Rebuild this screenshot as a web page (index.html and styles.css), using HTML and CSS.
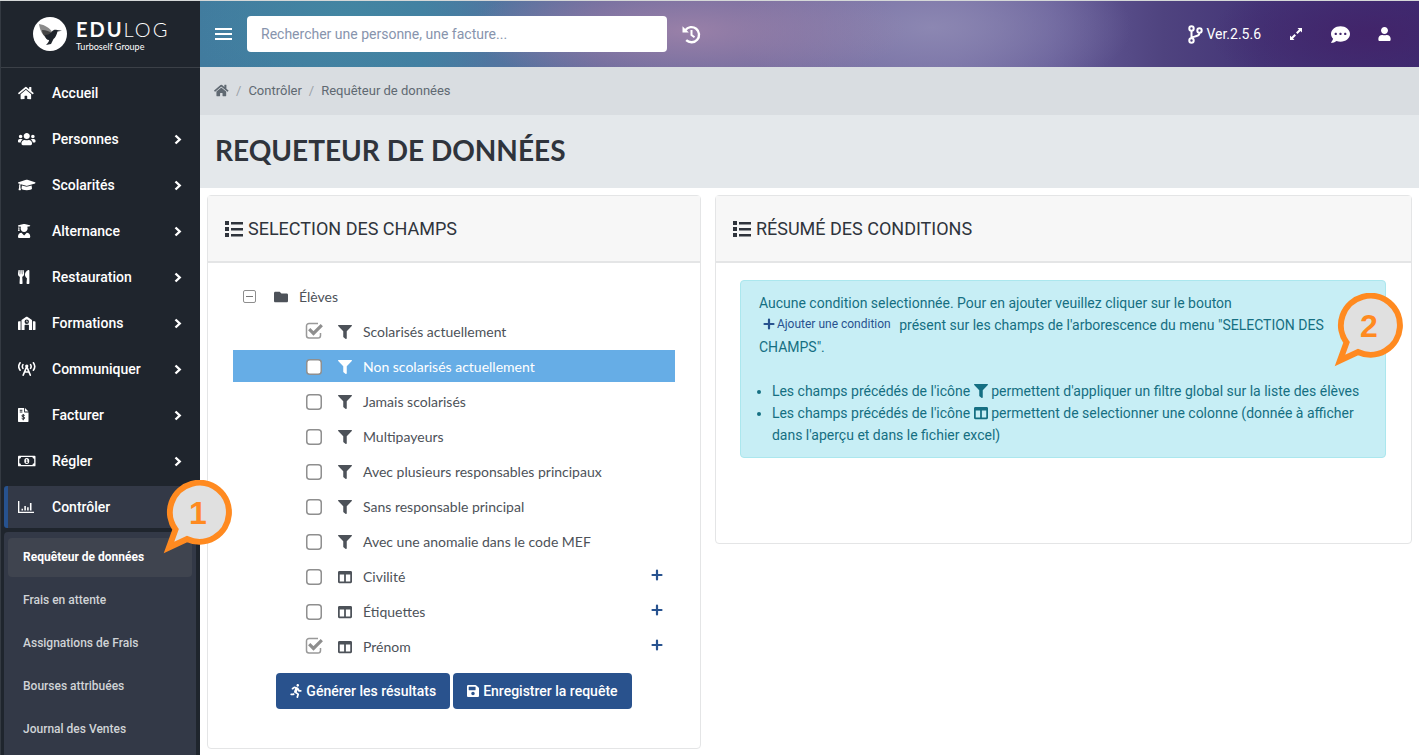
FILE: index.html
```html
<!DOCTYPE html>
<html lang="fr">
<head>
<meta charset="utf-8">
<meta name="viewport" content="width=device-width, initial-scale=1">
<title>Edulog - Requêteur de données</title>
<link rel="stylesheet" href="styles.css">
</head>
<body>
<svg class="sprite" aria-hidden="true">
  <symbol id="home" viewBox="0 0 576 512" preserveAspectRatio="xMinYMid"><path d="M280.37 148.26L96 300.11V464a16 16 0 0 0 16 16l112.06-.29a16 16 0 0 0 15.92-16V368a16 16 0 0 1 16-16h64a16 16 0 0 1 16 16v95.64a16 16 0 0 0 16 16.05L464 480a16 16 0 0 0 16-16V300L295.67 148.26a12.19 12.19 0 0 0-15.3 0zM571.6 251.47L488 182.56V44.05a12 12 0 0 0-12-12h-56a12 12 0 0 0-12 12v72.61L318.47 43a48 48 0 0 0-61 0L4.34 251.47a12 12 0 0 0-1.6 16.9l25.5 31A12 12 0 0 0 45.15 301l235.22-193.74a12.19 12.19 0 0 1 15.3 0L530.9 301a12 12 0 0 0 16.9-1.6l25.5-31a12 12 0 0 0-1.7-16.93z"/></symbol>
  <symbol id="users" viewBox="0 0 640 512" preserveAspectRatio="xMinYMid"><path d="M96 224c35.3 0 64-28.7 64-64s-28.7-64-64-64-64 28.7-64 64 28.7 64 64 64zm448 0c35.3 0 64-28.7 64-64s-28.7-64-64-64-64 28.7-64 64 28.7 64 64 64zm32 32h-64c-17.6 0-33.5 7.1-45.1 18.6 40.3 22.1 68.9 62 75.1 109.4h66c17.7 0 32-14.3 32-32v-32c0-35.3-28.7-64-64-64zm-256 0c61.9 0 112-50.1 112-112S381.9 32 320 32 208 82.1 208 144s50.1 112 112 112zm76.8 32h-8.3c-20.8 10-43.9 16-68.5 16s-47.6-6-68.5-16h-8.3C179.6 288 128 339.6 128 403.2V432c0 26.5 21.5 48 48 48h288c26.5 0 48-21.5 48-48v-28.8c0-63.6-51.6-115.2-115.2-115.2zm-223.7-13.4C161.5 263.1 145.6 256 128 256H64c-35.3 0-64 28.7-64 64v32c0 17.7 14.3 32 32 32h65.9c6.3-47.4 34.9-87.3 75.2-109.4z"/></symbol>
  <symbol id="cap" viewBox="0 0 640 512" preserveAspectRatio="xMinYMid"><path d="M622.34 153.2L343.4 67.5c-15.2-4.67-31.6-4.67-46.79 0L17.66 153.2c-23.54 7.23-23.54 38.36 0 45.59l48.63 14.94c-10.67 13.19-17.23 29.28-17.88 46.9C38.78 266.15 32 276.11 32 288c0 10.78 5.68 19.85 13.86 25.65L20.33 428.53C18.11 438.52 25.71 448 35.94 448h56.11c10.24 0 17.84-9.48 15.62-19.47L82.14 313.65C90.32 307.85 96 298.78 96 288c0-11.57-6.47-21.25-15.66-26.87.76-15.02 8.44-28.3 20.69-36.72L296.6 284.5c9.06 2.78 26.44 6.25 46.79 0l278.95-85.7c23.55-7.24 23.55-38.36 0-45.6zM352.79 315.09c-28.53 8.76-52.84 3.92-65.59 0l-145.02-44.55L128 384c0 35.35 85.96 64 192 64s192-28.65 192-64l-14.18-113.47-145.03 44.56z"/></symbol>
  <symbol id="graduate" viewBox="0 0 448 512" preserveAspectRatio="xMinYMid"><path d="M319.4 320.6L224 416l-95.4-95.4C57.1 323.7 0 382.2 0 454.4v9.6c0 26.5 21.5 48 48 48h352c26.5 0 48-21.5 48-48v-9.6c0-72.2-57.1-130.7-128.6-133.8zM13.6 79.8l6.4 1.5v58.4c-7 4.2-12 11.5-12 20.3 0 8.4 4.6 15.4 11.1 19.7L3.5 242c-1.7 6.9 2.1 14 7.6 14h41.8c5.5 0 9.3-7.1 7.6-14l-15.6-62.3C51.4 175.4 56 168.4 56 160c0-8.8-5-16.1-12-20.3V87.1l66 15.9c-8.6 17.2-14 36.4-14 57 0 70.7 57.3 128 128 128s128-57.3 128-128c0-20.6-5.3-39.8-14-57l96.3-23.2c18.2-4.4 18.2-27.1 0-31.5l-190.4-46c-13-3.1-26.7-3.1-39.7 0L13.6 48.2c-18.1 4.4-18.1 27.2 0 31.6z"/></symbol>
  <symbol id="utensils" viewBox="0 0 416 512" preserveAspectRatio="xMinYMid"><path d="M207.9 15.2c.8 4.7 16.1 94.5 16.1 128.8 0 52.3-27.8 89.6-68.9 104.6L168 486.7c.7 13.7-10.2 25.3-24 25.3H80c-13.7 0-24.7-11.5-24-25.3l12.9-238.1C27.7 233.6 0 196.2 0 144 0 109.6 15.3 19.9 16.1 15.2 19.3-5.1 61.4-5.4 64 16.3v141.2c1.3 3.4 15.1 3.2 16 0 1.4-25.3 7.9-139.2 8-141.8 3.3-20.8 44.7-20.8 47.9 0 .2 2.7 6.6 116.5 8 141.8.9 3.2 14.8 3.4 16 0V16.3c2.6-21.6 44.8-21.4 48-1.1zm119.2 285.7l-15 185.1c-1.2 14 9.9 26 23.9 26h56c13.3 0 24-10.7 24-24V24c0-13.2-10.7-24-24-24-82.5 0-221.4 178.5-64.9 300.9z"/></symbol>
  <symbol id="school" viewBox="0 0 640 512" preserveAspectRatio="xMinYMid"><path fill-rule="evenodd" d="M0 224a32 32 0 0 1 32-32h64v320H16a16 16 0 0 1-16-16zM544 192h64a32 32 0 0 1 32 32v272a16 16 0 0 1-16 16h-80zM128 164a32 32 0 0 1 14-26L302 31a32 32 0 0 1 36 0l160 107a32 32 0 0 1 14 26v348H400V336a16 16 0 0 0-16-16H256a16 16 0 0 0-16 16v176H128zM320 128a80 80 0 1 0 0 160 80 80 0 0 0 0-160zm-12 36h24v36h32v24h-56z"/></symbol>
  <symbol id="tower" viewBox="0 0 640 512" preserveAspectRatio="xMinYMid"><g fill="none" stroke="currentColor" stroke-width="58" stroke-linecap="round"><path d="M78 28C18 110 18 222 78 298M562 28c60 82 60 194 0 270M180 96c-28 45-28 94 0 138M460 96c28 45 28 94 0 138"/><path d="M320 170L190 482M320 170l130 312M240 364h160"/></g><circle cx="320" cy="150" r="60"/></symbol>
  <symbol id="invoice" viewBox="0 0 384 512" preserveAspectRatio="xMinYMid"><path fill-rule="evenodd" d="M24 0h200v136a24 24 0 0 0 24 24h136v328a24 24 0 0 1-24 24H24a24 24 0 0 1-24-24V24A24 24 0 0 1 24 0zM64 64v32h96V64zm0 64v32h96v-32zM256 0l128 128H256z"/><path fill="none" stroke="#1f242b" stroke-width="36" d="M245 274c-20-25-102-28-106 14-3 44 109 28 108 77-1 43-85 48-113 12M192 224v224"/></symbol>
  <symbol id="money" viewBox="0 0 640 512" preserveAspectRatio="xMinYMid"><path fill-rule="evenodd" d="M32 64h576a32 32 0 0 1 32 32v320a32 32 0 0 1-32 32H32a32 32 0 0 1-32-32V96a32 32 0 0 1 32-32zm80 48a64 64 0 0 1-64 64v160a64 64 0 0 1 64 64h416a64 64 0 0 1 64-64V176a64 64 0 0 1-64-64z"/><ellipse cx="320" cy="256" rx="92" ry="112"/><path fill="none" stroke="#1f242b" stroke-width="34" d="M290 220l32-18v96m-34 14h68"/></symbol>
  <symbol id="chart" viewBox="0 0 512 448" preserveAspectRatio="xMinYMid"><path d="M0 32h44v340h468v44H0zM112 276h50v60h-50zm90-84h50v144h-50zm90 40h50v104h-50zm90-136h50v240h-50z"/></symbol>
  <symbol id="chevron" viewBox="0 0 8 12"><path fill="none" stroke="currentColor" stroke-width="2.4" d="M1.5 2.500L5.700 6.500l-4.200 4"/></symbol>
  <symbol id="filter" viewBox="0 0 512 512"><path d="M487.976 0H24.028C2.71 0-8.047 25.866 7.058 40.971L192 225.941V432c0 7.831 3.821 15.17 10.237 19.662l80 55.98C298.02 518.69 320 507.493 320 487.98V225.941l184.947-184.97C520.021 25.896 509.338 0 487.976 0z"/></symbol>
  <symbol id="columns" viewBox="0 0 512 512"><path d="M464 32H48C21.49 32 0 53.49 0 80v352c0 26.51 21.49 48 48 48h416c26.51 0 48-21.49 48-48V80c0-26.51-21.49-48-48-48zM224 416H64V160h160v256zm224 0H288V160h160v256z"/></symbol>
  <symbol id="folder" viewBox="0 0 512 512"><path d="M464 128H272l-64-64H48C21.49 64 0 85.49 0 112v288c0 26.51 21.49 48 48 48h416c26.51 0 48-21.49 48-48V176c0-26.51-21.49-48-48-48z"/></symbol>
  <symbol id="plus" viewBox="0 0 12 12"><path fill="none" stroke="currentColor" stroke-width="2.2" stroke-linecap="round" d="M6 1.5v9M1.5 6h9"/></symbol>
  <symbol id="list" viewBox="0 0 18 16"><path d="M0 0h4v4H0zM0 6h4v4H0zM0 12h4v4H0zM6 1h12v2.500H6zM6 7h12v2.500H6zM6 13h12v2.500H6z"/></symbol>
  <symbol id="save" viewBox="0 0 448 512"><path d="M433.941 129.941l-83.882-83.882A48 48 0 0 0 316.118 32H48C21.49 32 0 53.49 0 80v352c0 26.51 21.49 48 48 48h352c26.51 0 48-21.49 48-48V163.882a48 48 0 0 0-14.059-33.941zM224 416c-35.346 0-64-28.654-64-64 0-35.346 28.654-64 64-64s64 28.654 64 64c0 35.346-28.654 64-64 64zm96-304.52V212c0 6.627-5.373 12-12 12H76c-6.627 0-12-5.373-12-12V108c0-6.627 5.373-12 12-12h228.52c3.183 0 6.235 1.264 8.485 3.515l3.48 3.48A11.996 11.996 0 0 1 320 111.48z"/></symbol>
  <symbol id="running" viewBox="0 0 416 512"><path d="M272 96c26.51 0 48-21.49 48-48S298.51 0 272 0s-48 21.49-48 48 21.49 48 48 48zM113.69 317.47l-14.8 34.52H32c-17.67 0-32 14.33-32 32s14.33 32 32 32h77.45c19.25 0 36.58-11.44 44.11-29.09l8.79-20.52-10.67-6.3c-17.32-10.23-30.06-25.37-37.99-42.61zM384 223.99h-44.03l-26.06-53.25c-12.5-25.55-35.45-44.23-61.78-50.94l-71.08-21.14c-28.3-6.8-57.77-.55-80.84 17.14l-39.67 30.41c-14.03 10.75-16.69 30.83-5.92 44.86s30.84 16.66 44.86 5.92l39.69-30.41c7.67-5.89 17.44-8 25.27-6.14l14.7 4.37-37.46 87.39c-12.62 29.48-1.31 64.01 26.3 80.31l84.98 50.17-27.47 87.73c-5.28 16.86 4.11 34.82 20.97 40.09 3.19 1 6.41 1.48 9.58 1.48 13.61 0 26.23-8.77 30.52-22.45l31.64-101.06c5.91-20.77-2.89-43.08-21.64-54.39l-61.24-36.14 31.31-78.28 20.27 41.43c8 16.34 24.92 26.89 43.11 26.89H384c17.67 0 32-14.33 32-32s-14.33-31.99-32-31.99z"/></symbol>
  <symbol id="user" viewBox="0 0 448 512"><path d="M224 256c70.7 0 128-57.3 128-128S294.7 0 224 0 96 57.3 96 128s57.3 128 128 128zm89.6 32h-16.7c-22.2 10.2-46.9 16-72.9 16s-50.6-5.8-72.9-16h-16.7C60.2 288 0 348.2 0 422.4V464c0 26.5 21.5 48 48 48h352c26.5 0 48-21.5 48-48v-41.6c0-74.2-60.2-134.4-134.4-134.4z"/></symbol>
  <symbol id="comment" viewBox="0 0 512 512"><path d="M256 32C114.6 32 0 125.1 0 240c0 49.6 21.4 95 57 130.7C44.5 421.1 2.7 466 2.2 466.5c-2.2 2.3-2.8 5.7-1.5 8.7S4.8 480 8 480c66.3 0 116-31.8 140.6-51.4 32.7 12.3 69 19.4 107.4 19.4 141.4 0 256-93.1 256-208S397.4 32 256 32zM128 272c-17.7 0-32-14.3-32-32s14.3-32 32-32 32 14.3 32 32-14.3 32-32 32zm128 0c-17.7 0-32-14.3-32-32s14.3-32 32-32 32 14.3 32 32-14.3 32-32 32zm128 0c-17.7 0-32-14.3-32-32s14.3-32 32-32 32 14.3 32 32-14.3 32-32 32z"/></symbol>
  <symbol id="check" viewBox="0 0 18 18"><path fill="none" stroke="#999" stroke-width="1.5" d="M13 1.5H4A2.5 2.5 0 0 0 1.500 4v9.500a2.500 2.500 0 0 0 2.500 2.500h9a2.500 2.500 0 0 0 2.500-2.500V11"/><path fill="none" stroke="#8e8e8e" stroke-width="3.200" d="M4.200 7.200l4.300 4.300 8.300-8.300"/></symbol>
  <symbol id="box" viewBox="0 0 16 16"><rect x=".75" y=".75" width="14.500" height="14.500" rx="3" fill="#fff" stroke="#8f8f8f" stroke-width="1.500"/></symbol>
  <symbol id="bubble" viewBox="0 0 80 78"><path fill="#e0e0e0" stroke="#ff8a20" stroke-width="6" stroke-linejoin="miter" stroke-miterlimit="8" d="M19.500 49.500A29.500 29.500 0 1 1 31 59L13 67.500z"/></symbol>
</svg>

<div class="app">
  <aside class="sidebar">
    <a class="brand" href="#">
      <svg class="brand-mark" viewBox="0 0 34 34" aria-hidden="true"><circle cx="17" cy="17" r="17" fill="#fff"/><path fill="#8a8a8a" d="M6 7c6 1 11 4 13 8l-6 5C9 18 7 13 6 7z"/><path fill="#444" d="M9 13c4 0 8 1 10 4l-6 4c-2-2-4-5-4-8z"/><path fill="#1f242b" d="M12 18c3 0 5-1 7-3.500C20 13 22 12.500 24 13l5 .8-4.500.7c-1 3.500-2 6-4 7.500L18 27l-5 1c2-2 3-3.500 3-5-2 0-4-2-4-5z"/></svg>
      <span class="brand-text"><span class="brand-name"><b>EDU</b>LOG</span><span class="brand-sub">Turboself Groupe</span></span>
    </a>
    <nav class="nav" aria-label="Menu principal">
      <a class="nav-item" href="#"><svg class="nav-icon"><use href="#home"/></svg><span>Accueil</span></a>
      <a class="nav-item" href="#"><svg class="nav-icon"><use href="#users"/></svg><span>Personnes</span><svg class="chevron"><use href="#chevron"/></svg></a>
      <a class="nav-item" href="#"><svg class="nav-icon"><use href="#cap"/></svg><span>Scolarités</span><svg class="chevron"><use href="#chevron"/></svg></a>
      <a class="nav-item" href="#"><svg class="nav-icon"><use href="#graduate"/></svg><span>Alternance</span><svg class="chevron"><use href="#chevron"/></svg></a>
      <a class="nav-item" href="#"><svg class="nav-icon"><use href="#utensils"/></svg><span>Restauration</span><svg class="chevron"><use href="#chevron"/></svg></a>
      <a class="nav-item" href="#"><svg class="nav-icon"><use href="#school"/></svg><span>Formations</span><svg class="chevron"><use href="#chevron"/></svg></a>
      <a class="nav-item" href="#"><svg class="nav-icon"><use href="#tower"/></svg><span>Communiquer</span><svg class="chevron"><use href="#chevron"/></svg></a>
      <a class="nav-item" href="#"><svg class="nav-icon"><use href="#invoice"/></svg><span>Facturer</span><svg class="chevron"><use href="#chevron"/></svg></a>
      <a class="nav-item" href="#"><svg class="nav-icon"><use href="#money"/></svg><span>Régler</span><svg class="chevron"><use href="#chevron"/></svg></a>
      <a class="nav-item active" href="#"><svg class="nav-icon"><use href="#chart"/></svg><span>Contrôler</span></a>
      <div class="subnav">
        <a class="sub-item active" href="#">Requêteur de données</a>
        <a class="sub-item" href="#">Frais en attente</a>
        <a class="sub-item" href="#">Assignations de Frais</a>
        <a class="sub-item" href="#">Bourses attribuées</a>
        <a class="sub-item" href="#">Journal des Ventes</a>
        <div class="callout callout-menu"><svg><use href="#bubble"/></svg><span>1</span></div>
      </div>
    </nav>
  </aside>

  <div class="main">
    <header class="topbar">
      <button class="icon-btn" type="button" aria-label="Menu"><svg width="17" height="12" viewBox="0 0 17 12"><path d="M0 0h17v2H0zM0 5h17v2H0zM0 10h17v2H0z"/></svg></button>
      <input class="search" type="search" aria-label="Rechercher" placeholder="Rechercher une personne, une facture...">
      <button class="icon-btn" type="button" aria-label="Historique"><svg width="19" height="19" viewBox="0 0 19 19"><g fill="none" stroke="currentColor"><path stroke-width="2.400" d="M3.300 5.200A7.600 7.600 0 1 1 4.200 15.200"/><path stroke-width="2" d="M9.500 5v5l3 2.300"/></g><path d="M.5 1.200v6.300h6.300z"/></svg></button>
      <div class="tools">
        <a class="version" href="#"><svg width="15" height="19" viewBox="0 0 15 19"><g fill="none" stroke="currentColor" stroke-width="2"><circle cx="3.500" cy="3.500" r="2.200"/><circle cx="3.500" cy="15.500" r="2.200"/><circle cx="11.500" cy="5.500" r="2.200"/><path d="M3.500 5.500v8M11.500 7.500c0 3.500-2.500 3.500-8 5"/></g></svg>Ver.2.5.6</a>
        <button class="icon-btn" type="button" aria-label="Plein écran"><svg width="14" height="14" viewBox="0 0 14 14"><path d="M8.500 1H13v4.500l-1.500-1.500-3 3L7 5.500l3-3zM5.500 13H1V8.500L2.500 10l3-3L7 8.500l-3 3z"/></svg></button>
        <button class="icon-btn" type="button" aria-label="Messages"><svg width="19" height="19"><use href="#comment"/></svg></button>
        <button class="icon-btn" type="button" aria-label="Profil"><svg width="13" height="14"><use href="#user"/></svg></button>
      </div>
    </header>

    <nav class="breadcrumb" aria-label="Fil d'Ariane">
      <a href="#" aria-label="Accueil"><svg width="15" height="13"><use href="#home"/></svg></a>
      <span class="sep">/</span><a href="#">Contrôler</a>
      <span class="sep">/</span><a href="#">Requêteur de données</a>
    </nav>
    <div class="page-head"><h1>REQUETEUR DE DONNÉES</h1></div>

    <main class="content">
      <section class="card">
        <h2 class="card-head"><svg width="18" height="16"><use href="#list"/></svg>SELECTION DES CHAMPS</h2>
        <div class="card-body">
          <ul class="tree">
            <li class="row root"><button class="toggle" type="button" aria-label="Réduire"></button><svg class="ico"><use href="#folder"/></svg><span>Élèves</span></li>
            <li class="row"><input class="box" type="checkbox" id="f1" checked><svg class="tick"><use href="#check"/></svg><svg class="ico"><use href="#filter"/></svg><label for="f1">Scolarisés actuellement</label></li>
            <li class="row selected"><input class="box" type="checkbox" id="f2"><svg class="frame"><use href="#box"/></svg><svg class="ico"><use href="#filter"/></svg><label for="f2">Non scolarisés actuellement</label></li>
            <li class="row"><input class="box" type="checkbox" id="f3"><svg class="frame"><use href="#box"/></svg><svg class="ico"><use href="#filter"/></svg><label for="f3">Jamais scolarisés</label></li>
            <li class="row"><input class="box" type="checkbox" id="f4"><svg class="frame"><use href="#box"/></svg><svg class="ico"><use href="#filter"/></svg><label for="f4">Multipayeurs</label></li>
            <li class="row"><input class="box" type="checkbox" id="f5"><svg class="frame"><use href="#box"/></svg><svg class="ico"><use href="#filter"/></svg><label for="f5">Avec plusieurs responsables principaux</label></li>
            <li class="row"><input class="box" type="checkbox" id="f6"><svg class="frame"><use href="#box"/></svg><svg class="ico"><use href="#filter"/></svg><label for="f6">Sans responsable principal</label></li>
            <li class="row"><input class="box" type="checkbox" id="f7"><svg class="frame"><use href="#box"/></svg><svg class="ico"><use href="#filter"/></svg><label for="f7">Avec une anomalie dans le code MEF</label></li>
            <li class="row"><input class="box" type="checkbox" id="f8"><svg class="frame"><use href="#box"/></svg><svg class="ico"><use href="#columns"/></svg><label for="f8">Civilité</label><button class="add" type="button" aria-label="Ajouter une condition"><svg><use href="#plus"/></svg></button></li>
            <li class="row"><input class="box" type="checkbox" id="f9"><svg class="frame"><use href="#box"/></svg><svg class="ico"><use href="#columns"/></svg><label for="f9">Étiquettes</label><button class="add" type="button" aria-label="Ajouter une condition"><svg><use href="#plus"/></svg></button></li>
            <li class="row"><input class="box" type="checkbox" id="f10" checked><svg class="tick"><use href="#check"/></svg><svg class="ico"><use href="#columns"/></svg><label for="f10">Prénom</label><button class="add" type="button" aria-label="Ajouter une condition"><svg><use href="#plus"/></svg></button></li>
          </ul>
          <div class="actions">
            <button class="btn" type="button"><svg width="12" height="14"><use href="#running"/></svg>Générer les résultats</button>
            <button class="btn" type="button"><svg width="12" height="14"><use href="#save"/></svg>Enregistrer la requête</button>
          </div>
        </div>
      </section>

      <section class="card summary">
        <h2 class="card-head"><svg width="18" height="16"><use href="#list"/></svg>RÉSUMÉ DES CONDITIONS</h2>
        <div class="card-body">
          <div class="alert">
            <p>Aucune condition selectionnée. Pour en ajouter veuillez cliquer sur le bouton <button class="inline-add" type="button"><svg width="12" height="12"><use href="#plus"/></svg>Ajouter une condition</button> présent sur les champs de l'arborescence du menu "SELECTION DES CHAMPS".</p>
            <ul>
              <li>Les champs précédés de l'icône <svg><use href="#filter"/></svg> permettent d'appliquer un filtre global sur la liste des élèves</li>
              <li>Les champs précédés de l'icône <svg><use href="#columns"/></svg> permettent de selectionner une colonne (donnée à afficher dans l'aperçu et dans le fichier excel)</li>
            </ul>
            <div class="callout callout-info"><svg><use href="#bubble"/></svg><span>2</span></div>
          </div>
        </div>
      </section>
    </main>
  </div>
</div>
</body>
</html>
```

FILE: styles.css
```css
*, *::before, *::after { box-sizing: border-box; }

body {
  margin: 0;
  background: #fff;
  color: #4d5259;
  font-family: Roboto, "Liberation Sans", sans-serif;
  font-size: 14px;
}

a { color: inherit; text-decoration: none; }
button { border: 0; padding: 0; background: none; color: inherit; font: inherit; cursor: pointer; }
svg { fill: currentColor; flex: none; }
ul, p, h1, h2 { margin: 0; padding: 0; }
.sprite { position: absolute; width: 0; height: 0; }

.app {
  display: flex;
  height: 100vh;
  overflow: hidden;
  border-top: 1px solid #d5d8d8;
}

/* Sidebar */
.sidebar {
  display: flex;
  flex-direction: column;
  flex: none;
  width: 200px;
  background: #1f252d;
  border-left: 1px solid #343a42;
  color: #fff;
}
.brand {
  display: flex;
  align-items: center;
  gap: 9px;
  height: 67px;
  padding-left: 32px;
  border-bottom: 1px solid #3b4047;
}
.brand-mark { width: 34px; height: 34px; }
.brand-text { display: flex; flex-direction: column; font-family: Lato, sans-serif; }
.brand-name { font-size: 20px; line-height: 24px; font-weight: 300; letter-spacing: 2px; }
.brand-name b { font-weight: 700; }
.brand-sub { font-size: 9px; line-height: 11px; }

.nav {
  display: flex;
  flex-direction: column;
  flex: 1;
  gap: 4px;
  padding: 4px 4px 0 3px;
}
.nav-item {
  display: flex;
  align-items: center;
  flex: none;
  height: 42px;
  padding: 0 14px 0 10px;
  border-left: 4px solid transparent;
  border-radius: 3px;
  font-weight: 500;
}
.nav-item.active { background: #333947; border-left-color: #27528f; }
.nav-item span { flex: 1; }
.nav-icon { width: 18px; height: 14px; margin-right: 16px; }
.chevron { width: 8px; height: 12px; }
.subnav {
  position: relative;
  display: flex;
  flex-direction: column;
  flex: 1;
  gap: 4px;
  padding: 6px 4px;
  background: #333947;
  border-radius: 4px 4px 0 0;
}
.sub-item {
  flex: none;
  padding: 0 15px;
  border-radius: 4px;
  color: #d0d3d6;
  font-size: 12px;
  font-weight: 500;
  line-height: 39px;
}
.sub-item.active { background: #3f444f; color: #fff; font-weight: 700; }

/* Numbered bubbles laid over the page */
.callout { position: absolute; z-index: 2; width: 80px; height: 78px; }
.callout svg { display: block; width: 80px; height: 78px; }
.callout span {
  position: absolute;
  top: 14px;
  left: 32px;
  width: 20px;
  color: #ff8a20;
  font: bold 32px/38px "Liberation Sans", sans-serif;
  text-align: center;
}
.callout-menu { top: -52px; right: -40px; }
.callout-info { top: 12px; right: -22px; }

/* Top bar */
.main { flex: 1; min-width: 0; }
.topbar {
  display: flex;
  align-items: center;
  gap: 15px;
  height: 66px;
  padding: 0 28px 0 15px;
  color: #fff;
  background:
    radial-gradient(ellipse 220px 60px at 40% 45%, #9980a8, transparent),
    radial-gradient(ellipse 200px 80px at 60% 40%, #8c87b2, transparent),
    radial-gradient(ellipse 160px 60px at 96% 50%, #42246a, transparent),
    radial-gradient(ellipse 160px 90px at 12% 30%, #4386a2, transparent),
    linear-gradient(90deg, #417b9e 0%, #427da2 18%, #67699c 33%, #736b9f 48%, #726ba2 62%, #655c98 70%, #4f437f 79%, #443577 87%, #3c2c72 100%);
}
.icon-btn { display: flex; align-items: center; justify-content: center; color: #fff; }
.search {
  width: 420px;
  height: 36px;
  padding: 0 14px;
  border: 0;
  border-radius: 4px;
  background: #fff;
  color: #4d5259;
  font: 14px Roboto, sans-serif;
}
.search::placeholder { color: #8794ad; opacity: 1; }
.tools { display: flex; align-items: center; gap: 28px; margin-left: auto; }
.version { display: flex; align-items: center; gap: 3px; }

.breadcrumb {
  display: flex;
  align-items: center;
  gap: 7px;
  height: 48px;
  padding: 0 14px 2px;
  background: #d9dde1;
  color: #606972;
  font-size: 13px;
}
.breadcrumb a { display: flex; }
.sep { color: #9ba1a8; }
.page-head { padding: 16px 15px 18px; background: #e4e8eb; }
.page-head h1 {
  color: #2f343c;
  font: bold 28px/39px Lato, sans-serif;
}

/* Cards */
.content {
  display: grid;
  grid-template-columns: minmax(0, 5fr) minmax(0, 7fr);
  align-items: start;
  padding: 7px 0;
}
.card { margin: 0 7px; border: 1px solid #e4e5e6; border-radius: 4px; background: #fff; }
.card-head {
  display: flex;
  align-items: center;
  gap: 5px;
  height: 67px;
  padding: 0 17px;
  border-bottom: 2px solid #e4e5e6;
  background: #f7f7f7;
  color: #2f343c;
  font-size: 18px;
  font-weight: 400;
}
.card-body { padding: 17px 25px 39px; }
.summary .card-body { min-height: 280px; padding: 17px 25px 24px 24px; }

.tree { display: flex; flex-direction: column; gap: 3px; list-style: none; }
.row {
  display: flex;
  align-items: center;
  position: relative;
  height: 32px;
  padding: 1px 12px 0 73px;
  font-family: Lato, sans-serif;
  font-size: 14px;
}
.root { padding-left: 10px; }
.selected { background: #66ade6; color: #fff; }
.ico { width: 14px; height: 14px; margin: 0 11px 0 16px; }
.root .ico { margin: 0 11px 0 18px; }
.row label { flex: 1; }
.toggle { width: 13px; height: 13px; border: 1px solid #8e8e8e; border-radius: 2px; display: grid; place-items: center; }
.toggle::before { content: ""; width: 7px; height: 1px; background: #777; }
.box { appearance: none; width: 16px; height: 16px; margin: 0; }
.tick, .frame { position: absolute; pointer-events: none; }
.tick { left: 72px; top: 7px; width: 18px; height: 18px; }
.frame { left: 73px; top: 9px; width: 16px; height: 16px; }
.add { display: flex; padding-bottom: 3px; color: #27528f; }
.add svg { width: 12px; height: 12px; }

.actions { display: flex; flex-wrap: wrap; justify-content: center; gap: 3px; margin-top: 11px; }
.btn {
  display: flex;
  align-items: center;
  gap: 4px;
  height: 36px;
  padding: 0 14px;
  border-radius: 4px;
  background: #29528d;
  color: #fff;
  font-weight: 500;
}

/* Information box */
.alert {
  position: relative;
  padding: 11px 18px;
  border: 1px solid #abe7ee;
  border-radius: 4px;
  background: #c7eef5;
  color: #156f82;
  line-height: 22px;
}
.alert p { margin-bottom: 22px; }
.alert ul { padding-left: 13px; }
.alert li svg { width: 14px; height: 14px; vertical-align: -2px; }
.inline-add {
  display: inline-flex;
  align-items: center;
  gap: 2px;
  margin: 0 5px 0 4px;
  color: #27528f;
  font-size: 12px;
  line-height: 14px;
}
```
